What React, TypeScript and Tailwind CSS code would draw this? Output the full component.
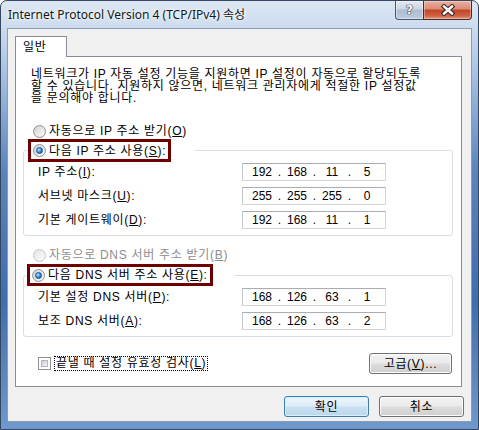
import { Fragment, type ReactNode } from "react";

// 창 안의 기본 글꼴
const FONT = "font-['Liberation_Sans','Noto_Sans_CJK_KR',sans-serif]";

function Radio({ checked, disabled }: { checked?: boolean; disabled?: boolean }) {
  return (
    <span
      className={`flex h-[13px] w-[13px] shrink-0 items-center justify-center rounded-full border ${
        disabled
          ? "border-[#c6c6c6] bg-[linear-gradient(135deg,#e4e4e4,#fbfbfb)]"
          : "border-[#8e8f8f] bg-[linear-gradient(135deg,#cfd1d4,#fbfbfb)]"
      }`}
    >
      {checked && (
        <span className="h-[7px] w-[7px] rounded-full border border-[#19508f] bg-[radial-gradient(circle_at_35%_35%,#b4ecff,#2f86d6_55%,#0f4c91)]" />
      )}
    </span>
  );
}

function IpBox({ parts }: { parts: string[] }) {
  return (
    <div className="flex h-[18px] w-[144px] items-center border border-[#d2d5da] border-t-[#abadb3] border-l-[#c4c7cc] bg-white pl-[5px] text-[12px] leading-[16px] tracking-normal text-black">
      {parts.map((p, i) => (
        <Fragment key={i}>
          {i > 0 && <span className="w-[7px] text-center">.</span>}
          <span className="w-[28px] text-center">{p}</span>
        </Fragment>
      ))}
    </div>
  );
}

function Row({ label, parts }: { label: ReactNode; parts: string[] }) {
  return (
    <div className="flex h-[18px] items-center">
      <span className="w-[204px] whitespace-nowrap text-[12px] leading-[18px]">{label}</span>
      <IpBox parts={parts} />
    </div>
  );
}

function WinButton({
  children,
  primary,
  className,
}: {
  children: ReactNode;
  primary?: boolean;
  className?: string;
}) {
  return (
    <button
      className={`flex h-[21px] items-center justify-center rounded-[3px] border text-[12px] leading-[14px] text-black ${
        primary
          ? "border-[#3c7fb1] bg-[linear-gradient(#ebf4fa_0%,#dfedf7_48%,#c9e0f0_52%,#bcd7ec_100%)] shadow-[inset_0_0_0_1px_#d6f0fc]"
          : "border-[#707070] bg-[linear-gradient(#f2f2f2_0%,#ebebeb_48%,#dddddd_52%,#cfcfcf_100%)] shadow-[inset_0_0_0_1px_#fbfbfb]"
      } ${className ?? ""}`}
    >
      {children}
    </button>
  );
}

export default function App() {
  return (
    <div
      className={`${FONT} flex h-[430px] w-[479px] flex-col rounded-t-[7px] border border-[#34475e] bg-[linear-gradient(180deg,#dde7f3_0px,#cbdbee_28px,#aac2e2_70px,#5a84bd_170px,#3f6eab_300px,#6f99cd_428px)]`}
    >
      {/* 제목 표시줄 */}
      <div className="flex h-[27px] shrink-0 items-start justify-between">
        <span className="flex h-[27px] items-center whitespace-nowrap pl-[7px] font-['Noto_Sans','Noto_Sans_CJK_KR',sans-serif] text-[12px] leading-[16px] text-[#101820] [text-shadow:0_0_6px_#fff,0_0_3px_#fff]">
          Internet Protocol Version 4 (TCP/IPv4) 속성
        </span>
        <div className="mr-[6px] flex">
          <div className="flex h-[19px] w-[28px] items-center justify-center rounded-bl-[4px] border border-t-0 border-r-0 border-[#4a5668] bg-[linear-gradient(#e3e9f1_0%,#ccd6e3_45%,#aebdd0_50%,#bccbdc_100%)] shadow-[inset_0_0_0_1px_rgba(255,255,255,0.45)]">
            <span className="font-['DejaVu_Sans',sans-serif] text-[12px] font-bold leading-[12px] text-white [text-shadow:0_0_1px_#222,0_0_1px_#222,0_0_1px_#222]">
              ?
            </span>
          </div>
          <div className="flex h-[19px] w-[49px] items-center justify-center rounded-br-[4px] border border-t-0 border-[#4a2a24] bg-[linear-gradient(#eab0a2_0%,#dc8a74_45%,#c2442a_50%,#cf5f43_80%,#e39478_100%)] shadow-[inset_0_0_0_1px_rgba(255,255,255,0.35)]">
            <svg width="14" height="12" viewBox="0 0 14 12">
              <path d="M3 2.5 L11 9.5 M11 2.5 L3 9.5" stroke="#3b2c2a" strokeWidth="4.6" strokeLinecap="square" />
              <path d="M3 2.5 L11 9.5 M11 2.5 L3 9.5" stroke="#ffffff" strokeWidth="2.4" strokeLinecap="square" />
            </svg>
          </div>
        </div>
      </div>

      {/* 클라이언트 영역 */}
      <div className="mx-[6px] mb-[7px] flex flex-1 flex-col border border-[#8a9bb1] bg-[#f0f0f0] pt-[7px] pl-[7px] tracking-[0.7px] text-black">
        {/* 탭 */}
        <div className="flex h-[20px]">
          <div className="relative -mb-px flex h-[21px] w-[52px] items-center border border-b-0 border-[#898c95] bg-white pl-[7px] text-[12px] leading-[14px]">
            일반
          </div>
        </div>

        {/* 탭 패널 */}
        <div className="flex h-[331px] w-[447px] flex-col border border-[#898c95] bg-white pt-[11px] pr-[8px] pl-[7px]">
          <div className="ml-[8px] flex flex-col whitespace-nowrap text-[12px] leading-[12px]">
            <div className="h-[12px]">네트워크가 IP 자동 설정 기능을 지원하면 IP 설정이 자동으로 할당되도록</div>
            <div className="h-[12px]">할 수 있습니다. 지원하지 않으면, 네트워크 관리자에게 적절한 IP 설정값</div>
            <div className="h-[12px]">을 문의해야 합니다.</div>
          </div>

          <label className="mt-[20px] ml-[10px] flex h-[14px] items-center gap-[3px] text-[12px] leading-[14px]">
            <Radio />
            <span>
              자동으로 IP 주소 받기(<u>O</u>)
            </span>
          </label>

          <fieldset className="mt-[1px] rounded-[3px] border border-[#d5dfe5] p-0">
            <legend className="ml-[4px] p-0">
              <div className="flex">
                <div className="flex h-[23px] items-center gap-[3px] border-[3px] border-[#700000] pr-[2px] pl-[2px] text-[12px] leading-[14px]">
                  <Radio checked />
                  <span className="whitespace-nowrap">
                    다음 IP 주소 사용(<u>S</u>):
                  </span>
                </div>
                <div className="w-[24px]" />
              </div>
            </legend>
            <div className="flex flex-col gap-[6px] pt-[1px] pb-[6px] pl-[14px]">
              <Row label={<>IP 주소(<u>I</u>):</>} parts={["192", "168", "11", "5"]} />
              <Row label={<>서브넷 마스크(<u>U</u>):</>} parts={["255", "255", "255", "0"]} />
              <Row label={<>기본 게이트웨이(<u>D</u>):</>} parts={["192", "168", "11", "1"]} />
            </div>
          </fieldset>

          <label className="mt-[12px] ml-[10px] flex h-[14px] items-center gap-[3px] text-[12px] leading-[14px] text-[#8d8d8d]">
            <Radio disabled />
            <span>
              자동으로 DNS 서버 주소 받기(<u>B</u>)
            </span>
          </label>

          <fieldset className="mt-[2px] rounded-[3px] border border-[#d5dfe5] p-0">
            <legend className="ml-[3px] p-0">
              <div className="flex">
                <div className="flex h-[22px] items-center gap-[3px] border-[3px] border-[#700000] pr-[2px] pl-[2px] text-[12px] leading-[14px]">
                  <Radio checked />
                  <span className="whitespace-nowrap">
                    다음 DNS 서버 주소 사용(<u>E</u>):
                  </span>
                </div>
                <div className="w-[21px]" />
              </div>
            </legend>
            <div className="flex flex-col gap-[6px] pt-[2px] pb-[6px] pl-[14px]">
              <Row label={<>기본 설정 DNS 서버(<u>P</u>):</>} parts={["168", "126", "63", "1"]} />
              <Row label={<>보조 DNS 서버(<u>A</u>):</>} parts={["168", "126", "63", "2"]} />
            </div>
          </fieldset>

          <div className="mt-[16px] flex h-[21px] items-center justify-between pl-[15px]">
            <label className="flex items-center gap-[3px]">
              <span className="h-[13px] w-[13px] border border-[#8e8f8f] bg-white p-[2px]">
                <span className="block h-full w-full border border-[#b4b8be] bg-[linear-gradient(135deg,#c9cdd3,#f4f4f4)]" />
              </span>
              <span className="h-[15px] border border-dotted border-black px-[1px] text-[12px] leading-[13px] whitespace-nowrap">
                끝낼 때 설정 유효성 검사(<u>L</u>)
              </span>
            </label>
            <WinButton className="mr-[1px] w-[83px]">
              고급(<u>V</u>)...
            </WinButton>
          </div>
        </div>

        {/* 확인 / 취소 */}
        <div className="mt-[9px] flex justify-end gap-[10px] pr-[7px]">
          <WinButton primary className="w-[85px]">
            확인
          </WinButton>
          <WinButton className="w-[85px]">취소</WinButton>
        </div>
      </div>
    </div>
  );
}
